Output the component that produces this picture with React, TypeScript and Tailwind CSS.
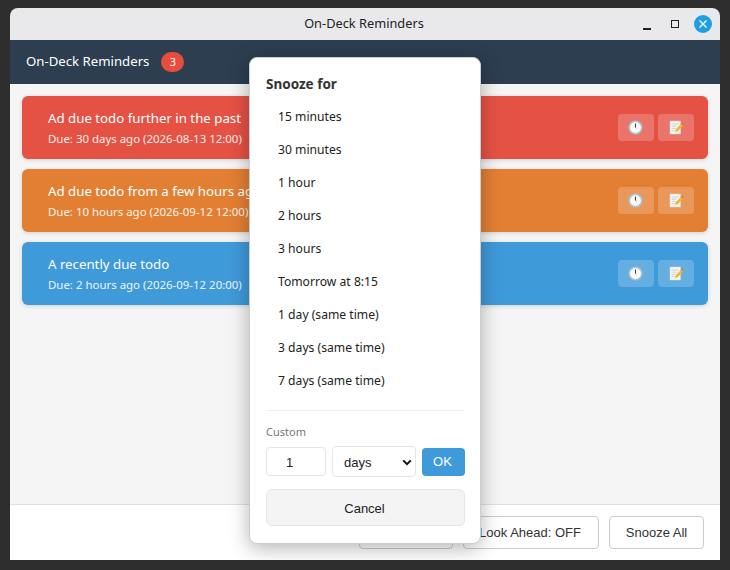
const SEGOE = "font-['Noto_Sans','Open_Sans',sans-serif]";

type Reminder = { title: string; due: string; bg: string };

const reminders: Reminder[] = [
  { title: "Ad due todo further in the past", due: "Due: 30 days ago (2026-08-13 12:00)", bg: "bg-[#e55244]" },
  { title: "Ad due todo from a few hours ago", due: "Due: 10 hours ago (2026-09-12 12:00)", bg: "bg-[#e37f33]" },
  { title: "A recently due todo", due: "Due: 2 hours ago (2026-09-12 20:00)", bg: "bg-[#3f9ada]" },
];

const snoozeOptions = [
  "15 minutes",
  "30 minutes",
  "1 hour",
  "2 hours",
  "3 hours",
  "Tomorrow at 8:15",
  "1 day (same time)",
  "3 days (same time)",
  "7 days (same time)",
];

function ClockEmoji() {
  return (
    <svg width="15" height="15" viewBox="0 0 15 15" className="-ml-px">
      <circle cx="7.5" cy="7.5" r="7" fill="#a9c6cf" />
      <circle cx="7.5" cy="7.5" r="5.4" fill="#fbfbfb" />
      <path d="M7.5 3.4v4.2" stroke="#444" strokeWidth="1.1" />
      <path d="M7.5 7.4l1 .8" stroke="#777" strokeWidth="0.9" />
    </svg>
  );
}

function MemoEmoji() {
  return (
    <svg width="15" height="15" viewBox="0 0 15 15">
      <rect x="1" y="1" width="10.5" height="13" fill="#f7f7f4" stroke="#d5d5d5" strokeWidth="0.5" />
      <path d="M2.5 4h7M2.5 6.2h5M2.5 8.4h4M2.5 10.6h3" stroke="#b9c2c8" strokeWidth="0.7" />
      <path d="M5.6 12.6l.6-2.6 6-6.4 2 1.9-6 6.3z" fill="#f2b632" />
      <path d="M12.2 3.6l.8-.9 2 1.9-1 1z" fill="#e0685c" />
      <path d="M5.6 12.6l.6-2.6 2 1.9z" fill="#f4d9a8" />
    </svg>
  );
}

function ReminderCard({ item }: { item: Reminder }) {
  return (
    <div className={`flex h-[63px] items-center justify-between rounded-md pl-[26px] pr-[14px] text-white shadow-[0_1px_4px_rgba(0,0,0,0.15)] ${item.bg}`}>
      <div className={SEGOE}>
        <div className="text-[13.25px] leading-[20px]">{item.title}</div>
        <div className="mt-[3px] text-[11.45px] leading-[16px] opacity-90">{item.due}</div>
      </div>
      <div className="flex gap-1">
        <button className="flex h-[27px] w-[36px] items-center justify-center rounded bg-white/20">
          <ClockEmoji />
        </button>
        <button className="flex h-[27px] w-[36px] items-center justify-center rounded bg-white/20">
          <MemoEmoji />
        </button>
      </div>
    </div>
  );
}

function SnoozeModal() {
  return (
    <div className="absolute left-[239px] top-[49px] w-[232px] rounded-lg border border-[#c9ced3] bg-white pb-[17px] pl-4 pr-[15px] pt-[14px] shadow-[0_4px_20px_rgba(0,0,0,0.3)]">
      <div className={`${SEGOE} text-[13.5px] font-bold leading-[24px] text-[#333]`}>Snooze for</div>
      <div className={`${SEGOE} mt-[4px] flex flex-col`}>
        {snoozeOptions.map((opt) => (
          <div key={opt} className="h-[33px] pl-3 text-[12.15px] leading-[33px] text-[#222]">
            {opt}
          </div>
        ))}
      </div>
      <div className="mt-[13px] border-t border-[#f0f0f0] pt-[13px]">
        <div className={`${SEGOE} text-[11px] leading-[16px] text-[#777]`}>Custom</div>
        <div className="mt-[6px] flex items-center gap-[6px] font-['Liberation_Sans',sans-serif] text-[13px]">
          <div className="flex h-[29px] w-[60px] items-center rounded border border-[#e6e6e6] pl-[19px] pt-[2px] text-[#222]">1</div>
          <div className="flex h-[31px] w-[84px] items-center justify-between rounded border border-[#e6e6e6] pl-[11px] pr-[3px] pt-[2px] text-[#222]">
            days
            <svg width="10" height="7" viewBox="0 0 10 7">
              <path d="M1.2 1.4L5 5.2l3.8-3.8" fill="none" stroke="#111" strokeWidth="2" />
            </svg>
          </div>
          <button className="h-[28px] w-[43px] rounded bg-[#3f9ada] pr-[2px] pt-[1px] text-white">OK</button>
        </div>
        <button className="mt-[12px] h-[37px] w-full rounded-md border border-[#e6e6e6] bg-[#f4f4f4] pr-[2px] pt-[2px] font-['Liberation_Sans',sans-serif] text-[13px] text-[#222]">
          Cancel
        </button>
      </div>
    </div>
  );
}

export default function App() {
  return (
    <div className="h-[570px] w-[730px] overflow-hidden bg-[#2e2e2e] pl-[10px] pr-[10px] pt-2">
      <div className="relative flex h-[552px] w-[710px] flex-col overflow-hidden rounded-t-lg">
        <div className={`${SEGOE} relative flex h-8 shrink-0 items-center justify-center bg-[#e9e9eb] pr-[2px] text-[12.8px] text-[#222]`}>
          On-Deck Reminders
          <div className="absolute right-[8px] top-[7px] flex items-center">
            <div className="mt-[9px] h-[2px] w-2 bg-[#222]" />
            <div className="ml-5 h-2 w-2 border-[1.5px] border-[#222]" />
            <div className="ml-[15px] flex h-[18px] w-[18px] items-center justify-center rounded-full bg-[#1f9fe3]">
              <svg width="10" height="10" viewBox="0 0 10 10">
                <path d="M1.5 1.5l7 7M8.5 1.5l-7 7" stroke="#fff" strokeWidth="1.3" />
              </svg>
            </div>
          </div>
        </div>
        <div className={`${SEGOE} flex h-11 shrink-0 items-center bg-[#2c3e50] pl-4 text-[13.2px] text-white`}>
          On-Deck Reminders
          <span className="ml-3 flex h-5 w-[23px] items-center justify-center rounded-full bg-[#e74c3c] text-[11px]">3</span>
        </div>
        <div className="flex flex-1 flex-col gap-[10px] bg-[#f5f5f5] px-3 pt-3">
          {reminders.map((r) => (
            <ReminderCard key={r.title} item={r} />
          ))}
        </div>
        <div className="flex h-[56px] shrink-0 items-start justify-end gap-[10px] border-t border-[#e0e0e0] bg-white pr-4 pt-[11px] font-['Liberation_Sans',sans-serif] text-[13px] text-[#333]">
          <button className="h-[33px] w-[94px] rounded border border-[#ccc]" />
          <button className="h-[33px] w-[136px] rounded border border-[#ccc] pr-[2px]">Look Ahead: OFF</button>
          <button className="h-[33px] w-[95px] rounded border border-[#ccc]">Snooze All</button>
        </div>
        <SnoozeModal />
      </div>
    </div>
  );
}
